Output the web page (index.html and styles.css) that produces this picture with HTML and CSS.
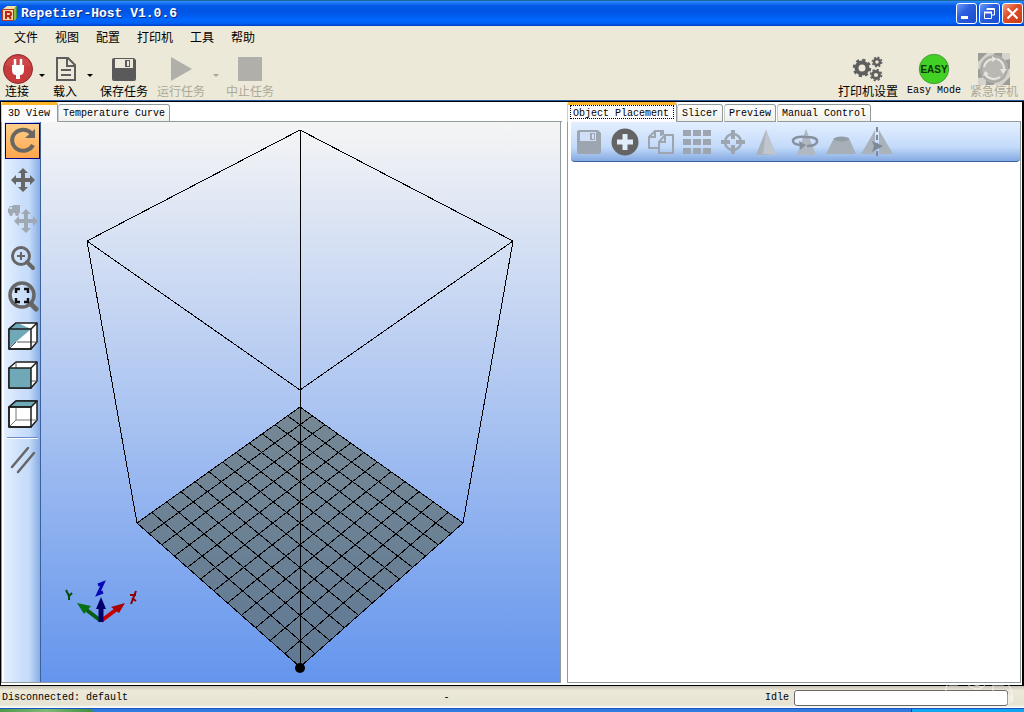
FILE: index.html
```html
<!DOCTYPE html>
<html lang="zh-CN">
<head>
<meta charset="utf-8">
<title>Repetier-Host V1.0.6</title>
<link rel="stylesheet" href="styles.css">
</head>
<body>
<header class="titlebar">
  <svg class="app-icon" width="16" height="16" viewBox="0 0 16 16" aria-hidden="true">
    <path d="M1 3L5 0H15L12 3Z" fill="#f2dfa4"/><path d="M12 3L15 0V12L12 15Z" fill="#47902f"/><path d="M13 2V14" stroke="#e9d25c"/>
    <rect width="12" height="12" y="3" x="0" fill="#b93325"/><rect x="1" y="4" width="10" height="10" fill="#f5d9a8"/>
    <path d="M4 13V6H7Q9 6 9 8T7 10H4M7 10L9 13" fill="none" stroke="#b5251b" stroke-width="2"/>
  </svg>
  <h1 class="title">Repetier-Host V1.0.6</h1>
  <div class="window-buttons">
    <button class="win" aria-label="Minimize"><svg width="19" height="19" viewBox="0 0 19 19"><path d="M4 13.500H11" stroke="#fff" stroke-width="3"/></svg></button>
    <button class="win" aria-label="Restore"><svg width="19" height="19" viewBox="0 0 19 19" fill="none" stroke="#fff"><path d="M7 6V4.500H14.500V11H12"/><path d="M7 5H14" stroke-width="2"/><path d="M4.500 8V14.500H11.500V8"/><path d="M4 8.500H12" stroke-width="2"/></svg></button>
    <button class="win close" aria-label="Close"><svg width="19" height="19" viewBox="0 0 19 19"><path d="M4.500 4.500L14.500 14.500M14.500 4.500L4.500 14.500" stroke="#fff" stroke-width="2.200"/></svg></button>
  </div>
</header>

<nav class="menubar">
  <button>文件</button><button>视图</button><button>配置</button><button>打印机</button><button>工具</button><button>帮助</button>
</nav>

<div class="toolbar">
  <button class="tool w34"><svg width="32" height="32" viewBox="0 0 32 32"><circle cx="17" cy="16" r="14.500" fill="#c73a3d" stroke="#8f2a2c"/><path d="M4 12A14 14 0 0 1 30 12Q17 17 4 12" fill="#d35154" opacity=".5"/><path d="M11 12H23V17Q23 22 19 22V26H15V22Q11 22 11 17Z" fill="#fff"/><path d="M14 6V13M20 6V13" stroke="#fff" stroke-width="2.500"/></svg><span>连接</span></button>
  <button class="caret w16" aria-label="连接选项"></button>
  <button class="tool w30"><svg width="32" height="32" viewBox="0 0 32 32" fill="none" stroke="#5e5e5e" stroke-width="2"><path d="M8 5H19L26 12V27H8Z"/><path d="M18 5V13H26M12 17H22M12 22H22"/></svg><span>载入</span></button>
  <button class="caret w20" aria-label="载入选项"></button>
  <button class="tool w48"><svg width="32" height="32" viewBox="0 0 32 32"><path d="M4 7Q4 5 6 5H26L28 7V26Q28 28 26 28H6Q4 28 4 26Z" fill="#5a5a5a"/><path d="M7 6H25V15H7Z" fill="#ece9dc"/><path d="M17 7H22V14H17Z" fill="#5a5a5a"/><path d="M19 8H21V13H19Z" fill="#ece9dc"/></svg><span>保存任务</span></button>
  <button class="tool w50 run" disabled><svg width="32" height="32" viewBox="0 0 32 32"><path d="M6 4L27 16L6 28Z" fill="#b0afaa"/></svg><span>运行任务</span></button>
  <button class="caret w20" disabled aria-label="运行选项"></button>
  <button class="tool w48" disabled><svg width="32" height="32" viewBox="0 0 32 32"><path d="M4 4H28V28H4Z" fill="#b0afaa"/></svg><span>中止任务</span></button>
  <div class="tool-group">
    <button class="tool w60"><svg width="32" height="32" viewBox="0 0 32 32" fill="none" stroke="#5f5f5f"><circle cx="10" cy="15" r="5.500" stroke-width="4"/><circle cx="10" cy="15" r="8" stroke-width="2.500" stroke-dasharray="3.200 3.083"/><circle cx="25" cy="9" r="3" stroke-width="2.500"/><circle cx="25" cy="9" r="4.700" stroke-width="1.500" stroke-dasharray="1.900 1.791"/><circle cx="24" cy="22" r="3.500" stroke-width="2.800"/><circle cx="24" cy="22" r="5.500" stroke-width="1.500" stroke-dasharray="2.200 2.120"/></svg><span>打印机设置</span></button>
    <button class="tool w54"><svg width="32" height="32" viewBox="0 0 32 32"><circle cx="16" cy="16" r="14.700" fill="#41d024" stroke="#4a9c3b"/><text x="16" y="20" class="easy">EASY</text></svg><span class="latin">Easy Mode</span></button>
    <button class="tool w48" disabled><svg width="32" height="32" viewBox="0 0 32 32"><path d="M0 0H32V32H0Z" fill="#9d9c98"/><path d="M0 9L9 0H17L0 17ZM24 0H32V6L24 8ZM0 25L8 24V32H0ZM32 15V24L24 32H15Z" fill="#d5d3ca"/><circle cx="16" cy="16" r="14" fill="#b3b2ad"/><circle cx="16" cy="16" r="12.500" fill="#b9b8b3" stroke="#a4a39e"/><g fill="none" stroke="#e6e5df" stroke-width="2"><path d="M6 14A10.500 10.500 0 0 1 15 6M19 6A10.500 10.500 0 0 1 26 18M22 24A10.500 10.500 0 0 1 7 21"/></g><path d="M14 3L19 6L14 9ZM29 16L25 21L22 16ZM5 23L7 18L11 21Z" fill="#e6e5df"/></svg><span>紧急停机</span></button>
  </div>
</div>

<main class="workspace">
  <section class="pane view-pane">
    <div class="tabs" role="tablist">
      <button class="tab active" role="tab" aria-selected="true">3D View</button>
      <button class="tab" role="tab">Temperature Curve</button>
      <span class="tab-rest"></span>
    </div>
    <div class="view-body">
      <div class="side-tools">
        <button class="side active" aria-label="Rotate"><svg width="32" height="32" viewBox="0 0 32 32"><path d="M25 9A11 10.500 0 1 0 26 20" fill="none" stroke="#686763" stroke-width="4"/><path d="M28 4V13H18Z" fill="#686763"/></svg></button>
        <button class="side" aria-label="Move"><svg width="32" height="32" viewBox="0 0 32 32"><path d="M16 4L21 9H18V14H23V11L28 16L23 21V18H18V23H21L16 28L11 23H14V18H9V21L4 16L9 11V14H14V9H11Z" fill="#666"/></svg></button>
        <button class="side" disabled aria-label="Move object"><svg width="32" height="32" viewBox="0 0 32 32" fill="#a0a9b3"><path d="M19 6L24 11H21V16H26V13L31 18L26 23V20H21V25H24L19 30L14 25H17V20H12V23L7 18L12 13V16H17V11H14Z"/><path d="M6 2H13V10H1V6L3 3H6Z"/><path d="M2 6L3 4H5V6Z" fill="#d2e0f3"/><circle cx="4" cy="11" r="2"/><circle cx="10" cy="11" r="2"/></svg></button>
        <button class="side" aria-label="Zoom"><svg width="32" height="32" viewBox="0 0 32 32" fill="none" stroke="#666"><circle cx="14" cy="14" r="8.500" stroke-width="3"/><path d="M14 10V18M10 14H18" stroke-width="2"/><path d="M20 20L26 26" stroke-width="4" stroke-linecap="round"/></svg></button>
        <button class="side" aria-label="Fit objects"><svg width="32" height="32" viewBox="0 0 32 32" fill="none" stroke="#666"><circle cx="15" cy="14" r="12" stroke-width="3.500"/><path d="M24 23L29 28" stroke-width="5" stroke-linecap="round"/><path d="M9 12V8H13M17 8H21V12M21 17V21H17M13 21H9V17" stroke="#111" stroke-width="2.500"/></svg></button>
        <button class="side" aria-label="Front view"><svg width="32" height="32" viewBox="0 0 32 32" fill="#fff" stroke="#1c1c1c" stroke-width="1.500" stroke-linejoin="round"><path d="M2 9L9 3H30V22L24 29H2Z"/><path d="M9 4H13L24 9L2 28V9Z" fill="#6fa8b6" stroke="none"/><path d="M10 22H30M9 22L2 29" stroke="#555" stroke-width="1"/><path d="M2 9H24V29H2ZM24 9L30 3M2 9L9 3" fill="none"/></svg></button>
        <button class="side" aria-label="Front face"><svg width="32" height="32" viewBox="0 0 32 32" fill="#fff" stroke="#1c1c1c" stroke-width="1.500" stroke-linejoin="round"><path d="M2 9L9 3H30V22L24 29H2Z"/><path d="M9 3V9M24 22H30" stroke="#555" stroke-width="1"/><path d="M2 9H24V29H2Z" fill="#6fa8b6"/><path d="M24 9L30 3"/></svg></button>
        <button class="side" aria-label="Top view"><svg width="32" height="32" viewBox="0 0 32 32" fill="#fff" stroke="#1c1c1c" stroke-width="1.500" stroke-linejoin="round"><path d="M2 9L9 3H30V22L24 29H2Z"/><path d="M2 9L9 3H30L24 9Z" fill="#6fa8b6"/><path d="M9 9V22H30M9 22L2 29" fill="none" stroke="#777" stroke-width="1"/><path d="M2 9H24V29H2Z" fill="none"/></svg></button>
        <hr class="side-sep">
        <button class="side" aria-label="Parallel projection"><svg width="32" height="32" viewBox="0 0 32 32"><path d="M5 23L21 4M11 28L27 9" stroke="#666" stroke-width="2.500" stroke-linecap="round"/></svg></button>
      </div>
      <svg class="scene" viewBox="41 123 519 560" role="img" aria-label="Print bed">
        <path d="M300 408L463 524L300 668L137 524Z" fill="#5d6b69" fill-opacity=".68"/>
        <path id="grid" class="wire"/>
        <path class="wire" d="M300 131L513 242L300 391L87 242ZM87 242L137 524M513 242L463 524M300 131V668"/>
        <circle cx="300" cy="669" r="5"/>
        <path d="M101 622L84 609" stroke="#075d12" stroke-width="4"/><path d="M77 604L91 607L84 615Z" fill="#087015"/>
        <path d="M101 622L117 610" stroke="#c80000" stroke-width="4"/><path d="M125 604L119 614L111 608Z" fill="#a90000"/>
        <path d="M101 623V607" stroke="#00006c" stroke-width="5"/><path d="M101 598L106 610H96Z" fill="#00006c"/>
        <path d="M66 591L69 597V601M72 594L69 597" fill="none" stroke="#064f0a" stroke-width="2"/>
        <path d="M98 586L103 584L98 595L103 593" fill="none" stroke="#0909b8" stroke-width="3"/>
        <path d="M136 592L131 605M130 596H136M132 599L136 602" fill="none" stroke="#8f0000" stroke-width="2"/>
      </svg>
    </div>
  </section>

  <section class="pane object-pane">
    <div class="tabs" role="tablist">
      <button class="tab active focused" role="tab" aria-selected="true">Object Placement</button>
      <button class="tab" role="tab">Slicer</button>
      <button class="tab" role="tab">Preview</button>
      <button class="tab" role="tab">Manual Control</button>
      <span class="tab-rest"></span>
    </div>
    <div class="object-body">
      <div class="object-tools">
        <button disabled aria-label="Save"><svg width="32" height="32" viewBox="0 0 32 32"><path d="M4 6Q4 4 6 4H25L28 7V26Q28 28 26 28H6Q4 28 4 26Z" fill="#9da5b0"/><path d="M7 6H23V15H7Z" fill="#cfe0f8"/><path d="M17 7H22V14H17Z" fill="#9da5b0"/><path d="M19 8H21V13H19Z" fill="#cfe0f8"/></svg></button>
        <button aria-label="Add object"><svg width="32" height="32" viewBox="0 0 32 32"><circle cx="16" cy="16" r="13.500" fill="#646464"/><path d="M16 8V24M8 16H24" stroke="#e2edfc" stroke-width="5"/></svg></button>
        <button disabled aria-label="Copy"><svg width="32" height="32" viewBox="0 0 32 32" fill="none" stroke="#9da5b0" stroke-width="2"><path d="M13 22H4V11L10 5H16V10M10 5V11H4M14 16L20 9H28V27H14ZM20 9V16H14"/><path d="M16 5H18V9"/></svg></button>
        <button disabled aria-label="Autoposition"><svg width="32" height="32" viewBox="0 0 32 32" fill="#9da5b0"><path d="M2 4h8v6H2zM12 4h8v6h-8zM22 4h8v6h-8zM2 13h8v6H2zM12 13h8v6h-8zM22 13h8v6h-8zM2 22h8v6H2zM12 22h8v6h-8zM22 22h8v6h-8z"/></svg></button>
        <button disabled aria-label="Center"><svg width="32" height="32" viewBox="0 0 32 32" fill="none" stroke="#9da5b0"><circle cx="16" cy="16" r="8" stroke-width="2.500"/><path d="M16 4V13M16 19V28M4 16H13M19 16H28" stroke-width="4"/></svg></button>
        <button disabled aria-label="Scale"><svg width="32" height="32" viewBox="0 0 32 32"><path d="M13 4L3 29H23Z" fill="#a9b1bb"/><path d="M13 4L23 29L10 28Z" fill="#bfc6ce"/></svg></button>
        <button disabled aria-label="Rotate object"><svg width="32" height="32" viewBox="0 0 32 32"><path d="M17 3L8 29H27Z" fill="#b0b8c2"/><path d="M11 19Q3 18 4 14Q6 10 17 11Q29 11 28 16Q27 20 18 20" fill="none" stroke="#87919e" stroke-width="2.500"/><path d="M10 15L17 19L11 24Z" fill="#87919e"/></svg></button>
        <button disabled aria-label="Cut"><svg width="32" height="32" viewBox="0 0 32 32"><path d="M1 28L9 12H24L31 28Z" fill="#a7afb9"/><ellipse cx="16.500" cy="13" rx="7.500" ry="2.500" fill="#949ca7"/></svg></button>
        <button disabled aria-label="Mirror"><svg width="32" height="32" viewBox="0 0 32 32"><path d="M14 4V28H0ZM18 4L32 28H18Z" fill="#aab2bc"/><path d="M16 1V31" stroke="#7e8896" stroke-width="2" stroke-dasharray="5 3"/><path d="M11 15L22 20L11 26L13 20Z" fill="#7e8896"/></svg></button>
      </div>
    </div>
  </section>
</main>

<footer class="statusbar">
  <span>Disconnected: default</span>
  <span class="status-mid">-</span>
  <label class="status-right" for="job">Idle</label>
  <progress id="job" value="0" max="100"></progress>
  <svg class="watermark" width="76" height="26" viewBox="0 0 76 26" fill="none" stroke="#fff" aria-hidden="true"><path d="M4 1Q1 5 2 12M5 3H14M23 2Q34 12 42 2M27 2L39 5M49 1V10M49 3H60M64 2Q70 10 68 20"/><circle cx="64" cy="17" r="5" fill="#fff" fill-opacity=".5" stroke="none"/></svg>
</footer>
<div class="taskbar"><span class="start"></span><span class="tray"></span></div>
<script src="grid.js"></script>
</body>
</html>
```
FILE: styles.css
```css
* { box-sizing: border-box; }
body {
  margin: 0;
  min-height: 100vh;
  display: flex;
  flex-direction: column;
  background: #ece9d8;
  color: #000;
  font: 12px/14px "Liberation Mono", "Noto Sans CJK SC", monospace;
}
button {
  margin: 0;
  padding: 0;
  border: 0;
  background: none;
  color: inherit;
  font: inherit;
}
svg { display: block; flex: none; }

.titlebar {
  height: 26px;
  display: flex;
  align-items: center;
  padding: 0 1px 0 2px;
  border-top: 1px solid #1b689e;
  background: linear-gradient(#2f8cff, #0058e6 20%, #0055e5 45%, #0066ff 75%, #0062f5 88%, #003dc8);
}
.title {
  flex: 1;
  margin: 0 0 0 3px;
  color: #fff;
  font-size: 13px;
  font-weight: bold;
  text-shadow: 1px 1px #0a2a80;
}
.window-buttons { display: flex; gap: 2px; }
.win {
  width: 21px;
  height: 21px;
  border: 1px solid #fff;
  border-radius: 3px;
  background: linear-gradient(135deg, #6e9cf5, #2a5fe0 40%, #1a4bcb);
}
.win.close { background: linear-gradient(135deg, #f0a088, #e0502c 40%, #c83a14); }

.menubar {
  height: 22px;
  display: flex;
  align-items: center;
  gap: 17px;
  padding: 0 14px;
}
.menubar button, .tool { font-family: "Noto Sans CJK SC", sans-serif; }

.toolbar {
  height: 53px;
  display: flex;
  align-items: flex-start;
  padding: 5px 6px 0 0;
  border-bottom: 1px solid #2f5ba8;
}
.tool {
  height: 44px;
  display: flex;
  flex-direction: column;
  align-items: center;
  white-space: nowrap;
}
.tool span { height: 12px; line-height: 12px; }
.tool:disabled { color: #aca899; }
.tool .latin, .tab, .statusbar { font-family: "Liberation Mono", monospace; font-size: 10px; }
.run { margin-left: 8px; }
.w16 { width: 16px; }
.w20 { width: 20px; }
.w30 { width: 30px; }
.w34 { width: 34px; }
.w48 { width: 48px; }
.w50 { width: 50px; }
.w54 { width: 54px; }
.w60 { width: 60px; }
.caret { height: 44px; display: flex; align-items: center; justify-content: center; }
.caret::before {
  content: "";
  border: 3px solid transparent;
  border-top-color: #000;
  border-bottom: 0;
}
.caret:disabled::before { border-top-color: #aca899; }
.tool-group { display: flex; gap: 9px; margin-left: auto; }
.easy { fill: #0b3304; font: bold 10px "Liberation Sans", sans-serif; text-anchor: middle; }

.workspace {
  flex: 1;
  display: flex;
  gap: 5px;
  border: solid #000;
  border-width: 1px 2px 1px 1px;
  padding-right: 1px;
  background: #fff;
}
.pane { display: flex; flex-direction: column; min-width: 0; padding-bottom: 2px; }
.view-pane { flex: 0 0 55%; }
.object-pane { flex: 1; }
.tabs { height: 20px; display: flex; align-items: flex-end; }
.tab {
  height: 18px;
  padding: 2px 4px 0;
  border: 1px solid #919b9c;
  border-left-color: #c5cfd0;
  border-radius: 3px 3px 0 0;
  background: linear-gradient(#fff, #f0f0ea);
  white-space: nowrap;
}
.tab + .tab { margin-left: 1px; }
.tab.active + .tab { margin-left: 0; }
.tab.active {
  height: 20px;
  padding: 0 7px 0 6px;
  border-top: 3px solid #ffb629;
  border-bottom: 0;
  background: #fcfcfe;
}
.tab.focused { padding: 0 7px 0 5px; outline: 1px dotted #000; outline-offset: -4px; }
.tab-rest { flex: 1; align-self: stretch; border-bottom: 1px solid #919b9c; }

.view-body {
  flex: 1;
  display: flex;
  margin-right: 1px;
  border: 1px solid #919b9c;
  border-top: 0;
  padding: 0 0 0 2px;
}
.side-tools {
  width: 37px;
  display: flex;
  flex-direction: column;
  gap: 3px;
  padding: 1px 0 0 1px;
  border-right: 1px solid #3b619c;
  background: linear-gradient(90deg, #e3efff, #cbdffb 50%, #c4dbf9 70%, #87ade4);
}
.side { height: 36px; display: flex; align-items: center; justify-content: center; }
.side.active { border: 1px solid #000080; background: linear-gradient(#ffd08c, #ffa64c); }
.side-sep {
  height: 2px;
  margin: 2px 2px 0;
  border: 0;
  border-top: 1px solid #6a8ccb;
  border-bottom: 1px solid #fff;
}
.scene {
  flex: 1;
  min-width: 0;
  width: 100%;
  background: linear-gradient(#f5f5f5, #6495ed);
}
.wire { fill: none; stroke: #000; stroke-width: 1; shape-rendering: crispEdges; }

.object-body { flex: 1; border: 1px solid #919b9c; border-top: 0; padding: 0 0 0 3px; }
.object-tools {
  height: 40px;
  display: flex;
  align-items: center;
  border-bottom: 1px solid #3b619c;
  border-radius: 0 0 4px 4px;
  background: linear-gradient(#e3efff, #cbdffb 50%, #c2d9f8 65%, #84aae2);
}
.object-tools button { width: 36px; display: flex; justify-content: center; }

.statusbar {
  position: relative;
  height: 22px;
  display: flex;
  align-items: center;
  padding: 1px 16px 0 2px;
  background: linear-gradient(#c5c2b4, #ece9d8 20%, #e6e3d2 85%, #fff);
}
.status-mid { flex: 1; text-align: center; }
.status-right { margin-right: 5px; }
progress {
  width: 214px;
  height: 16px;
  appearance: none;
  border: 1px solid #686868;
  border-radius: 3px;
  background: #fff;
}
progress::-webkit-progress-bar { background: #fff; border-radius: 3px; }
progress::-webkit-progress-value { background: #3fc43f; }
.watermark { position: absolute; right: 4px; bottom: 0; opacity: .7; }
.taskbar { height: 4px; display: flex; justify-content: space-between; background: #2f7be0; border-top: 1px solid #1c52c0; }
.start { width: 93px; background: linear-gradient(90deg, #4c9a4c, #7fb97a 50%, #3f8f3f); border-radius: 0 3px 0 0; }
.tray { width: 113px; background: #12a4ee; border-left: 1px solid #0a4a90; }
```
FILE: grid.js
```js
// Perspective projection of the 12 x 12 print bed grid.
const k = 28 / 232;
const near = [300, 668], left = [137, 524], right = [463, 524];
const project = (u, v) => {
  const w = 1 + k * (u + v);
  return [0, 1].map(i =>
    ((near[i] + u * ((1 + k) * right[i] - near[i]) + v * ((1 + k) * left[i] - near[i])) / w).toFixed(1)
  ).join(" ");
};
let d = "";
for (let i = 0; i <= 12; i++) {
  const t = i / 12;
  d += `M${project(t, 0)}L${project(t, 1)}M${project(0, t)}L${project(1, t)}`;
}
document.getElementById("grid").setAttribute("d", d);
```
